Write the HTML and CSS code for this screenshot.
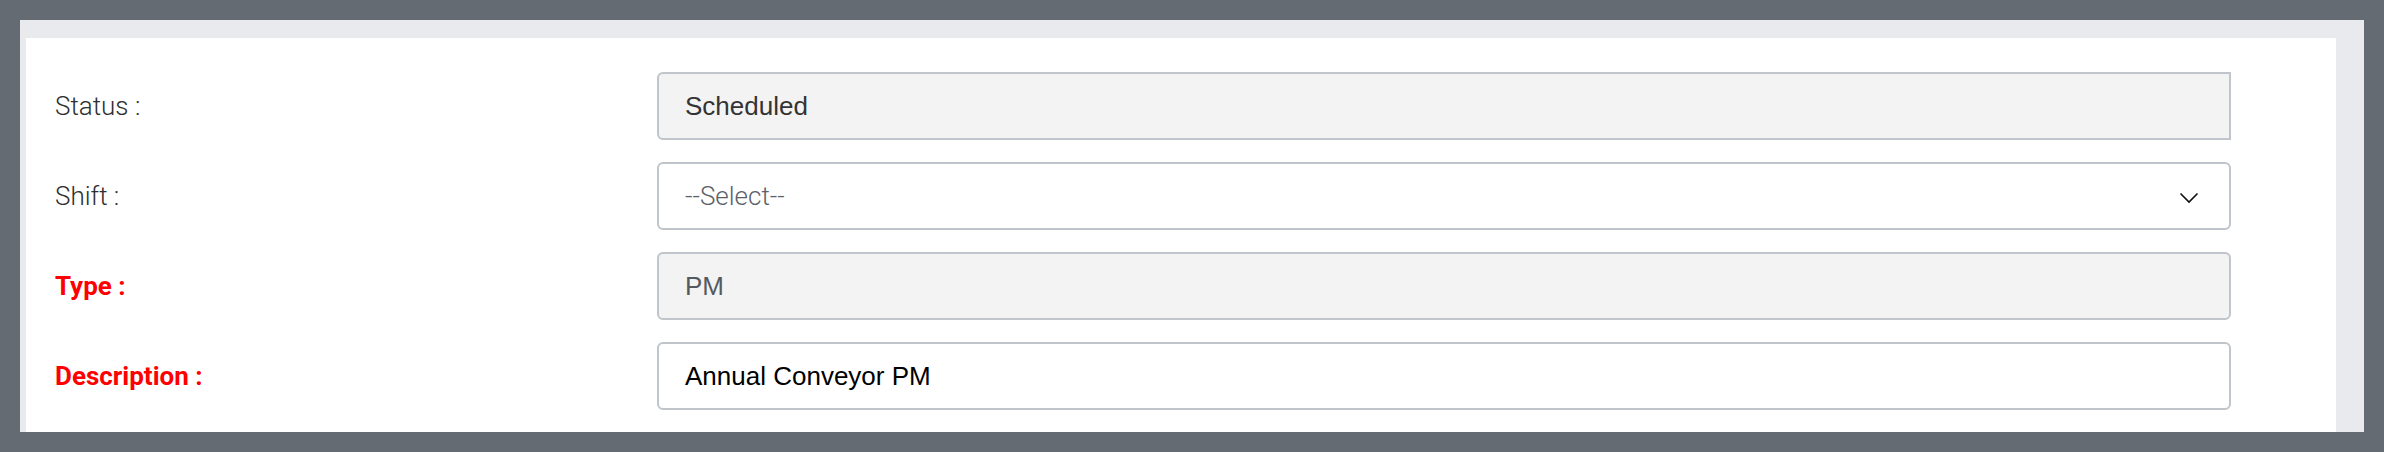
FILE: index.html
```html
<!DOCTYPE html>
<html lang="en">
<head>
<meta charset="utf-8">
<title>Work Order</title>
<link rel="stylesheet" href="styles.css">
</head>
<body>
  <div class="panel">
    <div class="card">
      <form class="form">
        <label class="label">Status :</label>
        <div class="field field-readonly field-group">Scheduled</div>

        <label class="label">Shift :</label>
        <div class="field field-select">
          <span class="placeholder">--Select--</span>
          <svg class="chevron" width="20" height="12" viewBox="0 0 20 12" aria-hidden="true">
            <path d="M1.5 1.5 L10 10 L18.5 1.5" fill="none" stroke="#111" stroke-width="1.6"/>
          </svg>
        </div>

        <label class="label label-required">Type :</label>
        <div class="field field-readonly field-muted">PM</div>

        <label class="label label-required">Description :</label>
        <div class="field field-value">Annual Conveyor PM</div>
      </form>
    </div>
  </div>
</body>
</html>
```

FILE: styles.css
```css
html, body {
  margin: 0;
  height: 452px;
  overflow: hidden;
}

body {
  background: #646b73;
  padding: 20px;
  box-sizing: border-box;
}

.panel {
  background: #e9eaee;
  height: 412px;
  padding: 18px 28px 0 6px;
  box-sizing: border-box;
  overflow: hidden;
}

.card {
  background: #ffffff;
  height: 394px;
  padding: 34px 0 0 29px;
  box-sizing: border-box;
}

.form {
  display: grid;
  grid-template-columns: 602px 1574px;
  grid-auto-rows: 68px;
  row-gap: 22px;
  align-items: center;
  margin: 0;
}

.label {
  font-family: Roboto, "Liberation Sans", sans-serif;
  font-weight: 300;
  font-size: 26px;
  color: #2f2f2f;
}

.label-required {
  color: #ff0000;
  font-weight: 700;
  font-size: 26px;
}

.field {
  height: 68px;
  box-sizing: border-box;
  border: 2px solid #bfc5ca;
  border-radius: 6px;
  padding: 0 26px;
  display: flex;
  align-items: center;
  font-family: "Liberation Sans", Arial, sans-serif;
  font-size: 26px;
  color: #000000;
  background: #ffffff;
}

.field-readonly {
  background: #f3f3f3;
  color: #333333;
}

.field-group {
  border-radius: 6px 0 0 6px;
}

.field-muted {
  color: #555a60;
}

.field-select {
  justify-content: space-between;
  padding-right: 30px;
}

.placeholder {
  font-family: Roboto, "Liberation Sans", sans-serif;
  font-weight: 300;
  font-size: 26px;
  color: #5c6168;
}

.chevron {
  display: block;
  margin-top: 4px;
}
```
